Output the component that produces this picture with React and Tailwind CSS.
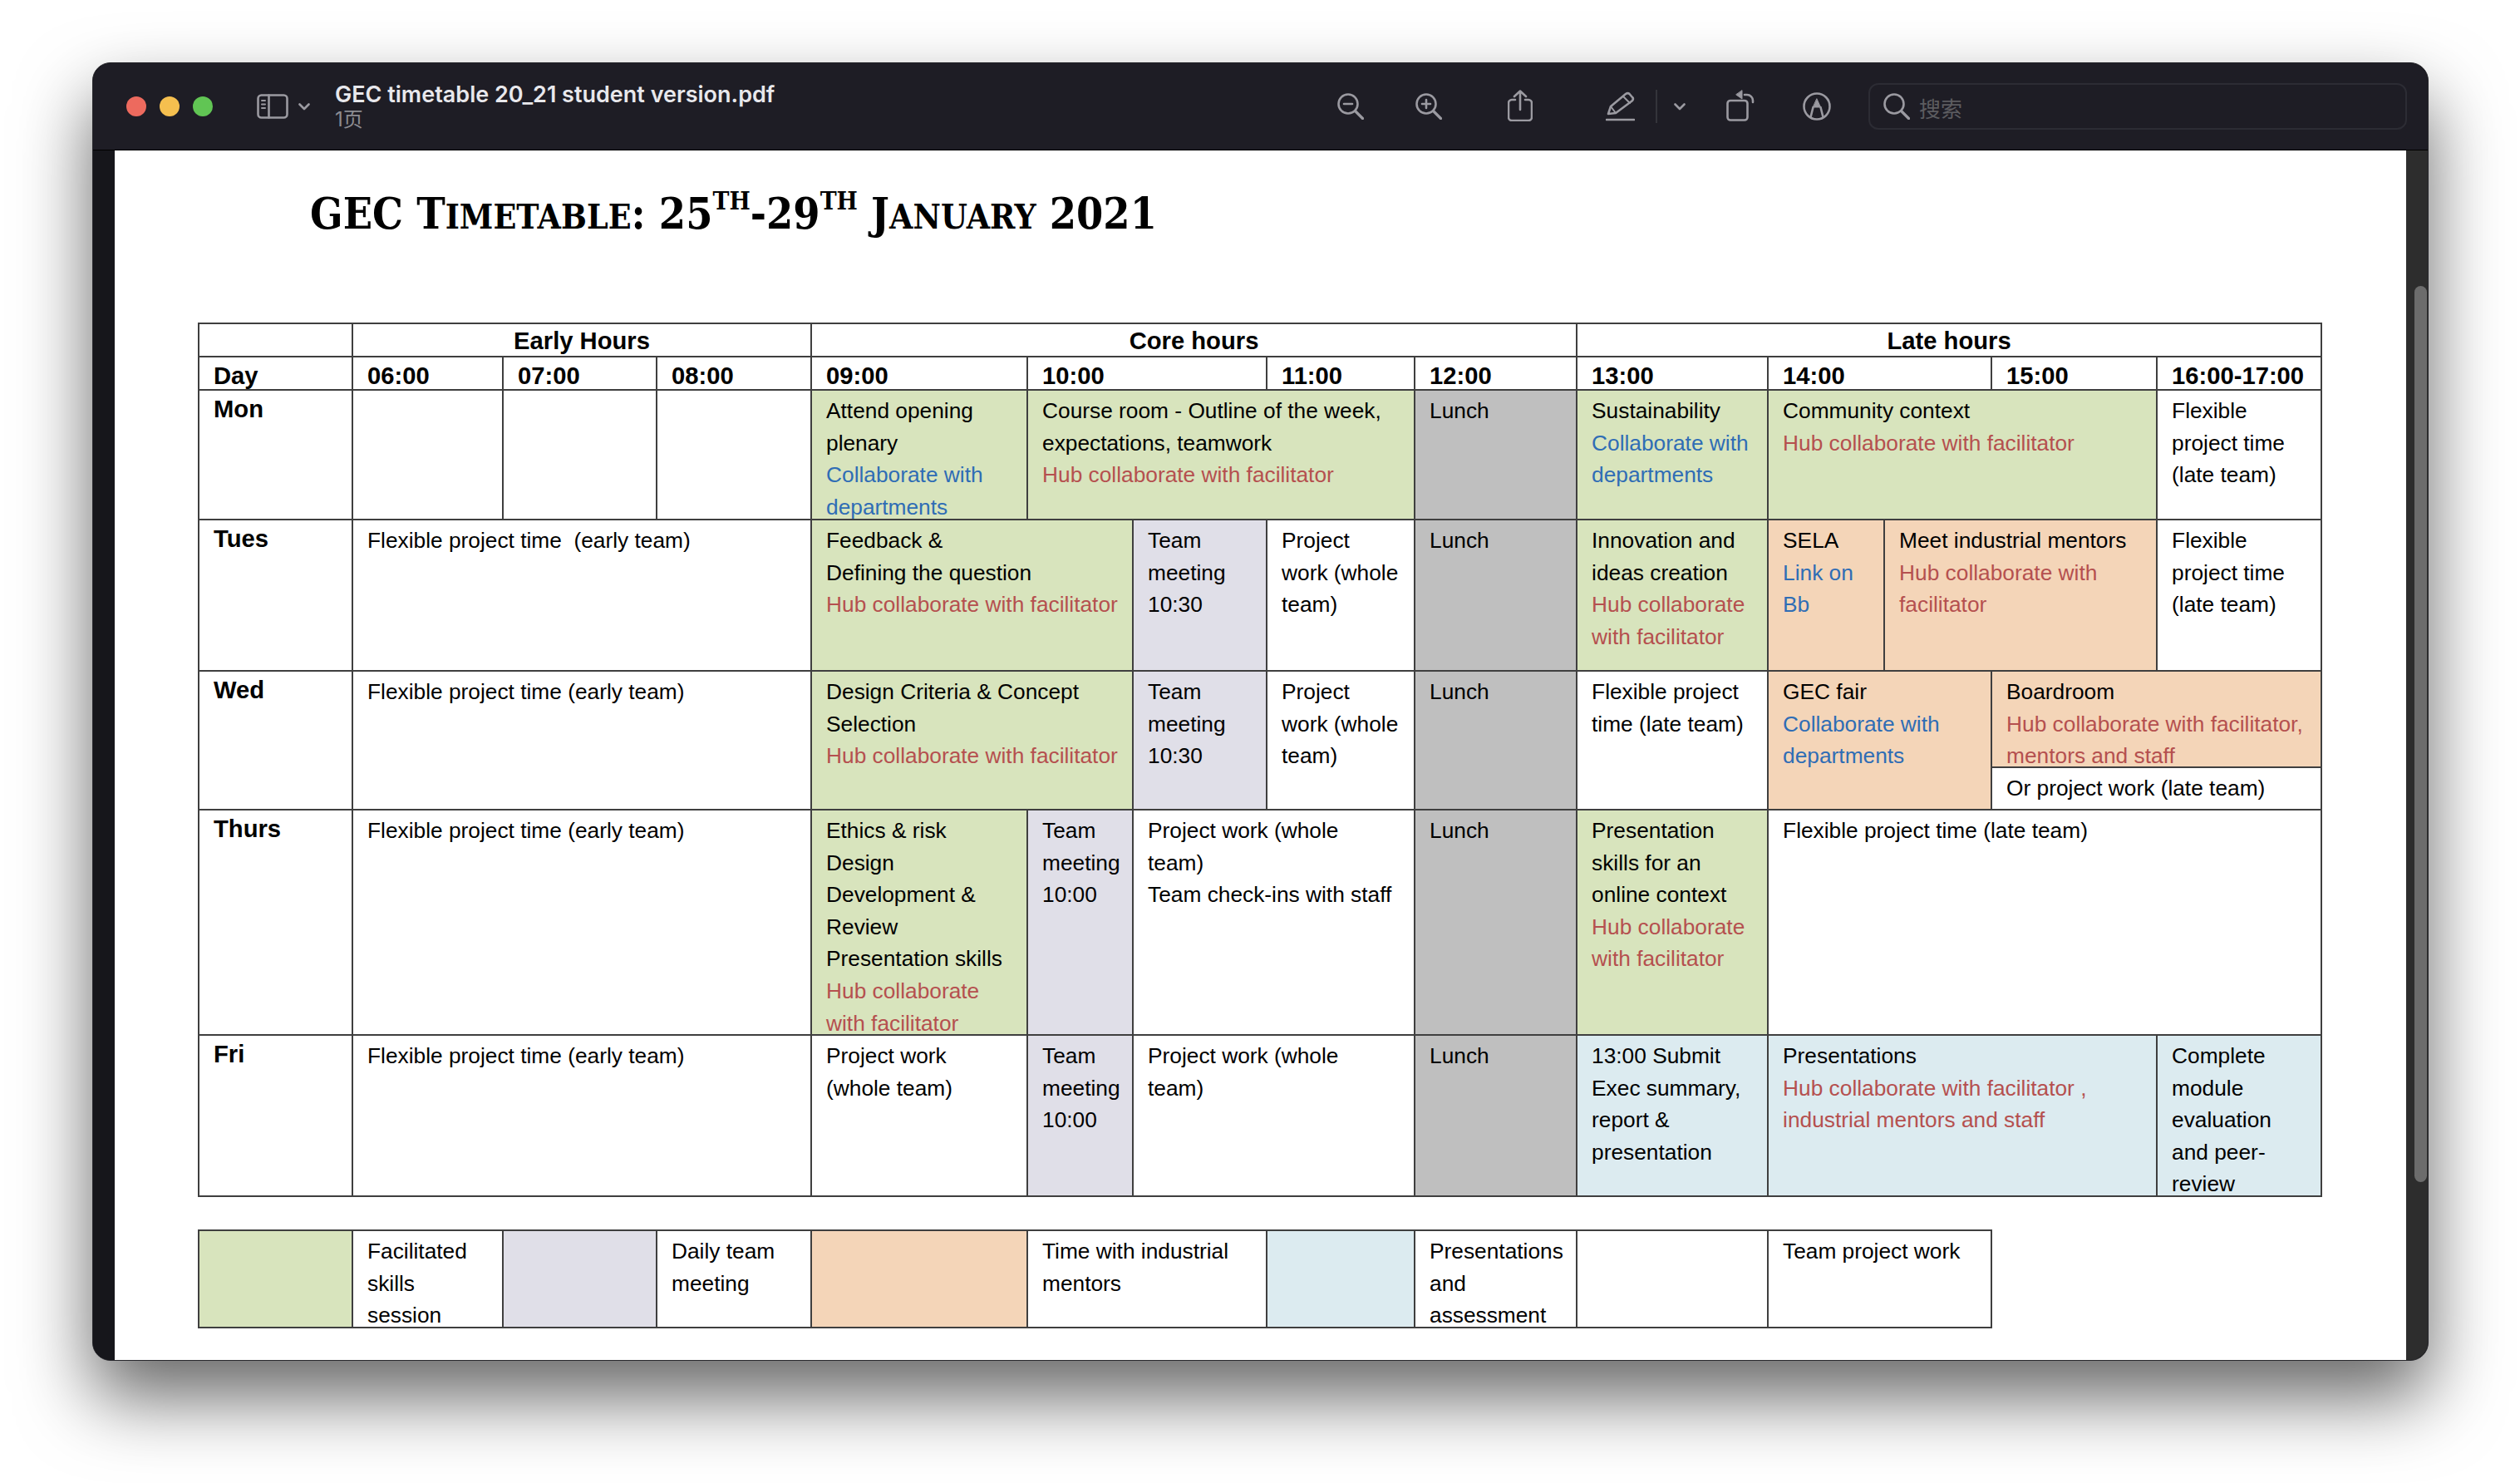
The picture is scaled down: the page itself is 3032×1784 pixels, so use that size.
const GREEN = "bg-[#d8e4bd]";
const LAV = "bg-[#e0dfe8]";
const PEACH = "bg-[#f4d5b8]";
const SKY = "bg-[#dcebf0]";
const GREY = "bg-[#bfbfbf]";

const R = (t) => ({ t, c: "text-[#b5504f]" });
const B = (t) => ({ t, c: "text-[#2f6db5]" });

function Cell({ h, bg = "bg-white", span, rows, lines = [], bold, head, center }) {
  const top = head ? head : bold ? "pt-[3px]" : "pt-[5px]";
  return (
    <td colSpan={span} rowSpan={rows} className={`border-2 border-[#3f3f3f] p-0 align-top ${bg}`}>
      <div className={`overflow-hidden ${h} ${top} pl-[17px] ${center ? "pr-[17px] text-center" : ""} ${bold ? "font-bold text-[29.2px]" : "text-[26.3px]"} ${head ? "leading-[38px]" : "leading-[38.6px]"}`}>
        {lines.map((l, i) => {
          const o = typeof l === "string" ? { t: l, c: "text-black" } : l;
          return (
            <div key={i} className={`whitespace-nowrap ${o.c}`}>
              {o.t}
            </div>
          );
        })}
      </div>
    </td>
  );
}

const COLS = [185, 181, 185, 186, 260, 127, 161, 178, 195, 230, 140, 129, 199, 198];
const LEGEND = [185, 181, 185, 186, 260, 288, 178, 195, 230, 269];

function Colgroup({ widths }) {
  return (
    <colgroup>
      {widths.map((w, i) => (
        <col key={i} style={{ width: w }} />
      ))}
    </colgroup>
  );
}

const H0 = "h-[38px]";
const M = "h-[154px]";
const T = "h-[180px]";
const W1 = "h-[114px]";
const W2 = "h-[49px]";
const WF = "h-[165px]";
const TH = "h-[269px]";
const F = "h-[192px]";
const L = "h-[115px]";
const P1 = "pt-[1px]";
const P2 = "pt-[3px]";

function Timetable() {
  return (
    <table className="table-fixed border-collapse w-[2554px]">
      <Colgroup widths={COLS} />
      <tbody>
        <tr>
          <Cell h={H0} head={P1} />
          <Cell h={H0} head={P1} bold center span={3} lines={["Early Hours"]} />
          <Cell h={H0} head={P1} bold center span={5} lines={["Core hours"]} />
          <Cell h={H0} head={P1} bold center span={5} lines={["Late hours"]} />
        </tr>
        <tr>
          <Cell h={H0} head={P2} bold lines={["Day"]} />
          <Cell h={H0} head={P2} bold lines={["06:00"]} />
          <Cell h={H0} head={P2} bold lines={["07:00"]} />
          <Cell h={H0} head={P2} bold lines={["08:00"]} />
          <Cell h={H0} head={P2} bold lines={["09:00"]} />
          <Cell h={H0} head={P2} bold span={2} lines={["10:00"]} />
          <Cell h={H0} head={P2} bold lines={["11:00"]} />
          <Cell h={H0} head={P2} bold lines={["12:00"]} />
          <Cell h={H0} head={P2} bold lines={["13:00"]} />
          <Cell h={H0} head={P2} bold span={2} lines={["14:00"]} />
          <Cell h={H0} head={P2} bold lines={["15:00"]} />
          <Cell h={H0} head={P2} bold lines={["16:00-17:00"]} />
        </tr>
        <tr>
          <Cell h={M} bold lines={["Mon"]} />
          <Cell h={M} />
          <Cell h={M} />
          <Cell h={M} />
          <Cell h={M} bg={GREEN} lines={["Attend opening", "plenary", B("Collaborate with"), B("departments")]} />
          <Cell h={M} bg={GREEN} span={3} lines={["Course room - Outline of the week,", "expectations, teamwork", R("Hub collaborate with facilitator")]} />
          <Cell h={M} bg={GREY} lines={["Lunch"]} />
          <Cell h={M} bg={GREEN} lines={["Sustainability", B("Collaborate with"), B("departments")]} />
          <Cell h={M} bg={GREEN} span={3} lines={["Community context", R("Hub collaborate with facilitator")]} />
          <Cell h={M} lines={["Flexible", "project time", "(late team)"]} />
        </tr>
        <tr>
          <Cell h={T} bold lines={["Tues"]} />
          <Cell h={T} span={3} lines={["Flexible project time \u00a0(early team)"]} />
          <Cell h={T} bg={GREEN} span={2} lines={["Feedback &", "Defining the question", R("Hub collaborate with facilitator")]} />
          <Cell h={T} bg={LAV} lines={["Team", "meeting", "10:30"]} />
          <Cell h={T} lines={["Project", "work (whole", "team)"]} />
          <Cell h={T} bg={GREY} lines={["Lunch"]} />
          <Cell h={T} bg={GREEN} lines={["Innovation and", "ideas creation", R("Hub collaborate"), R("with facilitator")]} />
          <Cell h={T} bg={PEACH} lines={["SELA", B("Link on"), B("Bb")]} />
          <Cell h={T} bg={PEACH} span={2} lines={["Meet industrial mentors", R("Hub collaborate with"), R("facilitator")]} />
          <Cell h={T} lines={["Flexible", "project time", "(late team)"]} />
        </tr>
        <tr>
          <Cell h={WF} rows={2} bold lines={["Wed"]} />
          <Cell h={WF} rows={2} span={3} lines={["Flexible project time (early team)"]} />
          <Cell h={WF} rows={2} bg={GREEN} span={2} lines={["Design Criteria & Concept", "Selection", R("Hub collaborate with facilitator")]} />
          <Cell h={WF} rows={2} bg={LAV} lines={["Team", "meeting", "10:30"]} />
          <Cell h={WF} rows={2} lines={["Project", "work (whole", "team)"]} />
          <Cell h={WF} rows={2} bg={GREY} lines={["Lunch"]} />
          <Cell h={WF} rows={2} lines={["Flexible project", "time (late team)"]} />
          <Cell h={WF} rows={2} bg={PEACH} span={2} lines={["GEC fair", B("Collaborate with"), B("departments")]} />
          <Cell h={W1} bg={PEACH} span={2} lines={["Boardroom", R("Hub collaborate with facilitator,"), R("mentors and staff")]} />
        </tr>
        <tr>
          <Cell h={W2} span={2} lines={["Or project work (late team)"]} />
        </tr>
        <tr>
          <Cell h={TH} bold lines={["Thurs"]} />
          <Cell h={TH} span={3} lines={["Flexible project time (early team)"]} />
          <Cell h={TH} bg={GREEN} lines={["Ethics & risk", "Design", "Development &", "Review", "Presentation skills", R("Hub collaborate"), R("with facilitator")]} />
          <Cell h={TH} bg={LAV} lines={["Team", "meeting", "10:00"]} />
          <Cell h={TH} span={2} lines={["Project work (whole", "team)", "Team check-ins with staff"]} />
          <Cell h={TH} bg={GREY} lines={["Lunch"]} />
          <Cell h={TH} bg={GREEN} lines={["Presentation", "skills for an", "online context", R("Hub collaborate"), R("with facilitator")]} />
          <Cell h={TH} span={4} lines={["Flexible project time (late team)"]} />
        </tr>
        <tr>
          <Cell h={F} bold lines={["Fri"]} />
          <Cell h={F} span={3} lines={["Flexible project time (early team)"]} />
          <Cell h={F} lines={["Project work", "(whole team)"]} />
          <Cell h={F} bg={LAV} lines={["Team", "meeting", "10:00"]} />
          <Cell h={F} span={2} lines={["Project work (whole", "team)"]} />
          <Cell h={F} bg={GREY} lines={["Lunch"]} />
          <Cell h={F} bg={SKY} lines={["13:00 Submit", "Exec summary,", "report &", "presentation"]} />
          <Cell h={F} bg={SKY} span={3} lines={["Presentations", R("Hub collaborate with facilitator ,"), R("industrial mentors and staff")]} />
          <Cell h={F} bg={SKY} lines={["Complete", "module", "evaluation", "and peer-", "review"]} />
        </tr>
      </tbody>
    </table>
  );
}

function Legend() {
  return (
    <table className="table-fixed border-collapse w-[2157px] mt-[39px]">
      <Colgroup widths={LEGEND} />
      <tbody>
        <tr>
          <Cell h={L} bg={GREEN} />
          <Cell h={L} lines={["Facilitated", "skills", "session"]} />
          <Cell h={L} bg={LAV} />
          <Cell h={L} lines={["Daily team", "meeting"]} />
          <Cell h={L} bg={PEACH} />
          <Cell h={L} lines={["Time with industrial", "mentors"]} />
          <Cell h={L} bg={SKY} />
          <Cell h={L} lines={["Presentations", "and", "assessment"]} />
          <Cell h={L} />
          <Cell h={L} lines={["Team project work"]} />
        </tr>
      </tbody>
    </table>
  );
}

const stroke = { fill: "none", stroke: "#9b9aa1", strokeWidth: 2.6, strokeLinecap: "round", strokeLinejoin: "round" };

function Chevron() {
  return (
    <svg width="14" height="9" viewBox="0 0 14 9" {...stroke}>
      <path d="M1.5 1.5 7 7l5.500-5.500" />
    </svg>
  );
}

function Mag({ inner }) {
  return (
    <svg width="32" height="32" viewBox="0 0 32 32" {...stroke}>
      <circle cx="13" cy="13" r="11.5" />
      <path d="M21.5 21.5 30.5 30.5" strokeWidth="3.2" />
      {inner}
    </svg>
  );
}

function Toolbar() {
  return (
    <div className="flex items-center h-[105px] shrink-0 bg-[#1e1d25] border-b border-black rounded-t-[22px]">
      <div className="flex gap-[16px] ml-[40px]">
        <span className="block w-[24px] h-[24px] rounded-full bg-[#ed6a5e]" />
        <span className="block w-[24px] h-[24px] rounded-full bg-[#f5bf4f]" />
        <span className="block w-[24px] h-[24px] rounded-full bg-[#61c554]" />
      </div>
      <svg className="ml-[53px]" width="38" height="30" viewBox="0 0 38 30" {...stroke}>
        <rect x="1.5" y="1.5" width="35" height="27" rx="4" />
        <path d="M14.5 1.5v27" />
        <path d="M6 8h4M6 12.500h4M6 17h4" strokeWidth="2" />
      </svg>
      <div className="ml-[12px]"><Chevron /></div>
      <div className="ml-[30px] flex flex-col w-[1206px] -mt-[2px]">
        <div className="font-['Inter','Liberation_Sans',sans-serif] text-[27px] leading-[34px] font-semibold text-[#e8e8ec] whitespace-nowrap">
          GEC timetable 20_21 student version.pdf
        </div>
        <div className="font-['Inter','Noto_Sans_CJK_SC',sans-serif] text-[24px] leading-[26px] text-[#8c8c92]">1页</div>
      </div>
      <Mag inner={<path d="M8 13h10" />} />
      <div className="ml-[62px]">
        <Mag inner={<path d="M8 13h10M13 8v10" />} />
      </div>
      <svg className="ml-[79px] -mt-[2px]" width="30" height="38" viewBox="0 0 30 38" {...stroke}>
        <path d="M9 12H5a4 4 0 0 0-4 4v17a4 4 0 0 0 4 4h20a4 4 0 0 0 4-4V16a4 4 0 0 0-4-4h-4" />
        <path d="M15 2v22M8 8l7-6.500L22 8" />
      </svg>
      <svg className="ml-[88px]" width="35" height="36" viewBox="0 0 35 36" {...stroke}>
        <path d="M3 27 6 18 24 3c2-1.500 3-1.500 4.500 0l3.500 4c1.500 1.500 1 3-.5 4.500L12 26Z" />
        <path d="M21 6l8 8M6 18l6 8" strokeWidth="2" />
        <path d="M1 34h33" />
      </svg>
      <span className="block ml-[25px] w-[2px] h-[40px] bg-[#34343b]" />
      <div className="ml-[20px]"><Chevron /></div>
      <svg className="ml-[49px] -mt-[2px]" width="34" height="38" viewBox="0 0 34 38" {...stroke}>
        <rect x="1.500" y="13" width="24" height="23.500" rx="3.500" />
        <path d="M32 15v-2a7 7 0 0 0-7-7h-3" />
        <path d="M19 1v10l-7-5Z" fill="#9b9aa1" strokeWidth="1" />
      </svg>
      <svg className="ml-[58px]" width="34" height="34" viewBox="0 0 34 34" {...stroke}>
        <circle cx="17" cy="17" r="15.500" />
        <path d="M17 8l4.500 10h-9Z" fill="#9b9aa1" strokeWidth="1" />
        <path d="M12.500 18 9.500 30M21.500 18l3 12" />
      </svg>
      <div className="ml-[45px] flex items-center w-[648px] h-[56px] border-2 border-[#2c2c34] rounded-[12px]">
        <div className="ml-[16px]">
          <svg width="32" height="32" viewBox="0 0 32 32" {...stroke}>
            <circle cx="13" cy="13" r="11.500" />
            <path d="M21.500 21.500 30.500 30.500" strokeWidth="3.200" />
          </svg>
        </div>
        <span className="ml-[11px] mt-[4px] font-['Noto_Sans_CJK_SC',sans-serif] text-[26px] leading-[32px] text-[#5c5c60]">搜索</span>
      </div>
    </div>
  );
}

export default function App() {
  return (
    <div className="w-[3032px] h-[1784px] overflow-hidden bg-white pt-[75px] pl-[111px] font-['Liberation_Sans',Arial,sans-serif] text-black">
      <div className="relative flex flex-col w-[2811px] h-[1562px] rounded-[22px] bg-[#16161b] border border-[#28282d] overflow-hidden shadow-[0_44px_88px_rgba(0,0,0,0.6)]">
        <Toolbar />
        <div className="flex flex-1 min-h-0">
          <div className="w-[26px] bg-[#16161b] shrink-0" />
          <div className="w-[2757px] shrink-0 bg-white pl-[100px] pt-[46px]">
            <h1 className="pl-[135px] h-[161px] font-['DejaVu_Serif','Liberation_Serif',serif] font-bold text-[52px] leading-[60px] whitespace-nowrap">
              <span className="block origin-left scale-x-[0.893]">
                GEC T<span className="text-[41px]">IMETABLE</span>: 25<sup className="text-[30px] leading-none -top-[23px]">TH</sup>-29<sup className="text-[30px] leading-none -top-[23px]">TH</sup> J<span className="text-[41px]">ANUARY</span> 2021
              </span>
            </h1>
            <Timetable />
            <Legend />
          </div>
          <div className="flex-1 bg-[#2d2d2d]" />
        </div>
        <div className="absolute left-[2793px] top-[268px] w-[15px] h-[1078px] rounded-full bg-[#6c6c6c]" />
      </div>
    </div>
  );
}
